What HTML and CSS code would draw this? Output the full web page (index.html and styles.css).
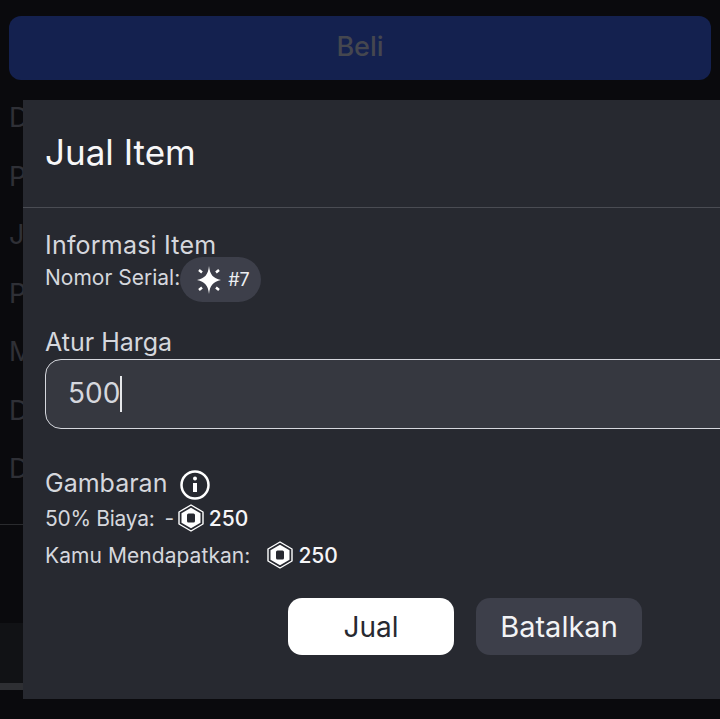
FILE: index.html
```html
<!doctype html>
<html>
  <head>
    <title>Jual Item</title>
    <link rel="stylesheet" href="styles.css">
  </head>
  <body>
    <div class="halaman">
      <button class="btn-beli">Beli</button>
      <ul class="detail">
        <li>D</li>
        <li>P</li>
        <li>J</li>
        <li>P</li>
        <li>M</li>
        <li>D</li>
        <li>D</li>
      </ul>
      <div class="garis"></div>
      <div class="pita"></div>
      <div class="gulir"></div>
    </div>

    <section class="modal">
      <h1 class="modal-judul">Jual Item</h1>
      <div class="modal-isi">
        <h2 class="judul-info">Informasi Item</h2>
        <div class="serial">
          <span class="serial-label">Nomor Serial:</span>
          <span class="lencana">
            <svg class="ikon-kilau" viewBox="0 0 30 30">
              <path class="isi" d="M15 1C16 10 19 13 27 15 19 17 16 20 15 29 14 20 11 17 3 15 11 13 14 10 15 1Z"/>
              <path class="garis-kilau" d="M5 5l3 2.500M25 5l-3 2.500M5 25l3-2.500M25 25l-3-2.500"/>
            </svg>
            #7
          </span>
        </div>

        <h2 class="judul-harga">Atur Harga</h2>
        <div class="input-harga"><span>500</span><i class="kursor"></i></div>

        <h2 class="judul-gambaran">
          Gambaran
          <svg class="ikon-info" viewBox="0 0 30 30">
            <circle cx="15" cy="15" r="13.500"/>
            <path d="M15 13v9"/>
            <circle class="titik" cx="15" cy="8.500" r="2"/>
          </svg>
        </h2>
        <div class="baris biaya">
          <span>50% Biaya:</span>
          <span class="minus">-</span>
          <svg class="ikon-robux" viewBox="0 0 26 28">
            <path class="luar" d="M13 1L25 8V20L13 27 1 20V8Z"/>
            <path class="dalam" fill-rule="evenodd" d="M13 3.800L22.500 9.300V18.700L13 24.200 3.500 18.700V9.300ZM10.500 9.500Q9 9.500 9 11V17Q9 18.500 10.500 18.500H15.500Q17 18.500 17 17V11Q17 9.500 15.500 9.500Z"/>
          </svg>
          <b>250</b>
        </div>
        <div class="baris dapat">
          <span>Kamu Mendapatkan:</span>
          <svg class="ikon-robux" viewBox="0 0 26 28">
            <path class="luar" d="M13 1L25 8V20L13 27 1 20V8Z"/>
            <path class="dalam" fill-rule="evenodd" d="M13 3.800L22.500 9.300V18.700L13 24.200 3.500 18.700V9.300ZM10.500 9.500Q9 9.500 9 11V17Q9 18.500 10.500 18.500H15.500Q17 18.500 17 17V11Q17 9.500 15.500 9.500Z"/>
          </svg>
          <b>250</b>
        </div>

        <div class="aksi">
          <button class="btn btn-jual">Jual</button>
          <button class="btn btn-batal">Batalkan</button>
        </div>
      </div>
    </section>
  </body>
</html>
```

FILE: styles.css
```css
* { box-sizing: border-box; }
html, body { height: 100%; }
body {
  margin: 0;
  overflow: hidden;
  background-color: #0a0a0d;
  font-family: "Inter", "DejaVu Sans", sans-serif;
  color: #d5d7dd;
}
button { font-family: inherit; border: none; padding: 0; }

.halaman {
  padding: 16px 9px 0;
  height: 100%;
}
.btn-beli {
  display: block;
  width: 100%;
  height: 64px;
  padding-bottom: 3px;
  border-radius: 12px;
  background-color: #14214f;
  color: #45474f;
  font-size: 27px;
  font-weight: 500;
}
.detail {
  list-style: none;
  margin: 9px 0 0;
  padding: 0;
  color: #2f3036;
  font-size: 27px;
  line-height: 58.500px;
}
.garis {
  margin: 25px -9px 0;
  height: 1px;
  background-color: #2a2b2e;
}
.pita {
  margin: 98px -9px 0;
  height: 60px;
  background-color: #111215;
}
.gulir {
  margin: 0 -9px;
  height: 7px;
  width: 40px;
  background-color: #2e2f33;
}

.modal {
  position: absolute;
  top: 100px;
  left: 23px;
  width: 760px;
  height: 599px;
  background-color: #272930;
}
.modal-judul {
  margin: 0;
  height: 108px;
  padding: 29px 22px 0;
  border-bottom: 1px solid #4a4c53;
  color: #f7f7f8;
  font-size: 35px;
  font-weight: 400;
  line-height: 46px;
}
.modal-isi { padding: 22px 22px 0; }
h2 {
  margin: 0;
  font-size: 25px;
  font-weight: 400;
  line-height: 30px;
}
.judul-info { letter-spacing: 0.200px; }
.serial {
  display: flex;
  align-items: center;
  height: 45px;
  margin-top: -3px;
  font-size: 21px;
}
.serial-label { margin-top: -4px; }
.lencana {
  display: flex;
  align-items: center;
  gap: 4px;
  height: 45px;
  width: 81px;
  padding-left: 14px;
  border-radius: 23px;
  background-color: #3d3f4a;
  color: #eceef2;
  font-size: 18px;
}
.ikon-kilau { width: 30px; height: 30px; flex: none; }
.ikon-kilau .isi { fill: #fff; }
.ikon-kilau .garis-kilau { stroke: #fff; stroke-width: 2.500; fill: none; }

.judul-harga { margin-top: 25px; }
.input-harga {
  display: flex;
  align-items: center;
  width: 720px;
  height: 70px;
  margin-top: 2px;
  padding-left: 22px;
  border: 1px solid #d5d7dd;
  border-radius: 16px;
  background-color: #363840;
  font-size: 28px;
  color: #d5d7dd;
}
.input-harga span { margin-top: -2px; }
.kursor {
  display: block;
  width: 2px;
  height: 36px;
  background-color: #e6e7ea;
}

.judul-gambaran {
  display: flex;
  align-items: center;
  gap: 13px;
  margin-top: 36px;
}
.ikon-info { width: 30px; height: 30px; margin-top: 5px; fill: none; stroke: #fff; stroke-width: 2.500; }
.ikon-info .titik { fill: #fff; stroke: none; }
.ikon-info path { stroke-width: 4; }

.baris {
  display: flex;
  align-items: center;
  height: 30px;
  font-size: 21px;
}
.biaya { margin-top: 3px; letter-spacing: -0.300px; }
.dapat { margin-top: 7px; letter-spacing: 0.060px; }
.baris b { color: #f5f5f7; font-size: 21px; font-weight: 500; letter-spacing: 0; }
.minus { margin-left: 10px; }
.ikon-robux { width: 26px; height: 28px; margin: 0 5px 0 4px; flex: none; }
.dapat .ikon-robux { margin-left: 17px; }
.ikon-robux .luar { fill: none; stroke: #fff; stroke-width: 1.400; stroke-linejoin: round; }
.ikon-robux .dalam { fill: #fff; }

.aksi {
  display: flex;
  gap: 22px;
  margin-top: 28px;
  padding-left: 243px;
}
.btn {
  width: 166px;
  height: 57px;
  border-radius: 14px;
  font-size: 28px;
  font-weight: 400;
}
.btn-jual { background-color: #fff; color: #272930; }
.btn-batal { background-color: #3d3f4a; color: #f2f3f5; font-size: 29px; }
```
